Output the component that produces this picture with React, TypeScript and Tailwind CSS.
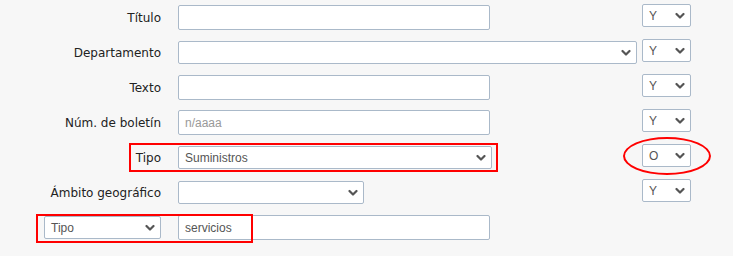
import type { ReactNode } from 'react';

const labelFont = { fontFamily: '"DejaVu Sans", Verdana, sans-serif' };

function Chevron() {
  return (
    <svg width="10" height="7" viewBox="0 0 10 7" className="pointer-events-none absolute right-[5px] top-1/2 -translate-y-1/2">
      <path d="M1.5 1.5 L5 5 L8.5 1.5" fill="none" stroke="#555" strokeWidth="2.2" strokeLinecap="round" strokeLinejoin="round" />
    </svg>
  );
}

function Select({ value, className }: { value?: string; className: string }) {
  return (
    <div className={`relative h-[23px] bg-white border border-[#aab9c9] rounded-[2px] ${className}`}>
      <div className="h-full flex items-center pl-[6px] text-[12px] text-[#555] font-['Liberation_Sans',Arial,sans-serif]">
        {value}
      </div>
      <Chevron />
    </div>
  );
}

function Input({ value, placeholder }: { value?: string; placeholder?: string }) {
  return (
    <div className="h-[25px] w-[312px] bg-white border border-[#aab9c9] rounded-[2px] flex items-center pl-[6px] text-[12px] font-['Liberation_Sans',Arial,sans-serif]">
      {value ? <span className="text-[#555]">{value}</span> : <span className="text-[#999]">{placeholder}</span>}
    </div>
  );
}

function Row({ label, field, op, children }: { label?: ReactNode; field: ReactNode; op?: string; children?: ReactNode }) {
  return (
    <div className="relative h-[35px] flex items-center">
      <div className="w-[161px] shrink-0 text-right text-[12px] text-[#222]" style={labelFont}>
        {label}
      </div>
      <div className="w-[464px] ml-[17px] shrink-0 flex items-center">{field}</div>
      {op && (
        <div className="self-start mt-[4px]">
          <Select value={op} className="w-[49px]" />
        </div>
      )}
      {children}
    </div>
  );
}

export default function App() {
  return (
    <main className="w-[733px] h-[256px] bg-[#f7f7f7] overflow-hidden">
      <Row label="Título" field={<Input />} op="Y" />
      <Row label="Departamento" field={<Select className="w-[459px]" />} op="Y" />
      <Row label="Texto" field={<Input />} op="Y" />
      <Row label="Núm. de boletín" field={<Input placeholder="n/aaaa" />} op="Y" />
      <Row label="Tipo" field={<Select value="Suministros" className="w-[314px]" />} op="O">
        {/* highlight marks */}
        <div className="absolute left-[129px] top-[3px] w-[369px] h-[29px] border-2 border-[#f00]" />
        <div className="absolute left-[623px] top-[-3px] w-[88px] h-[38px] rounded-[50%] border-2 border-[#f00]" />
      </Row>
      <Row label="Ámbito geográfico" field={<Select className="w-[186px]" />} op="Y" />
      <div className="relative h-[35px] flex items-center">
        <div className="w-[161px] shrink-0 flex justify-end">
          <Select value="Tipo" className="w-[117px]" />
        </div>
        <div className="ml-[17px]">
          <Input value="servicios" />
        </div>
        <div className="absolute left-[36px] top-[4px] w-[217px] h-[29px] border-2 border-[#f00]" />
      </div>
    </main>
  );
}
